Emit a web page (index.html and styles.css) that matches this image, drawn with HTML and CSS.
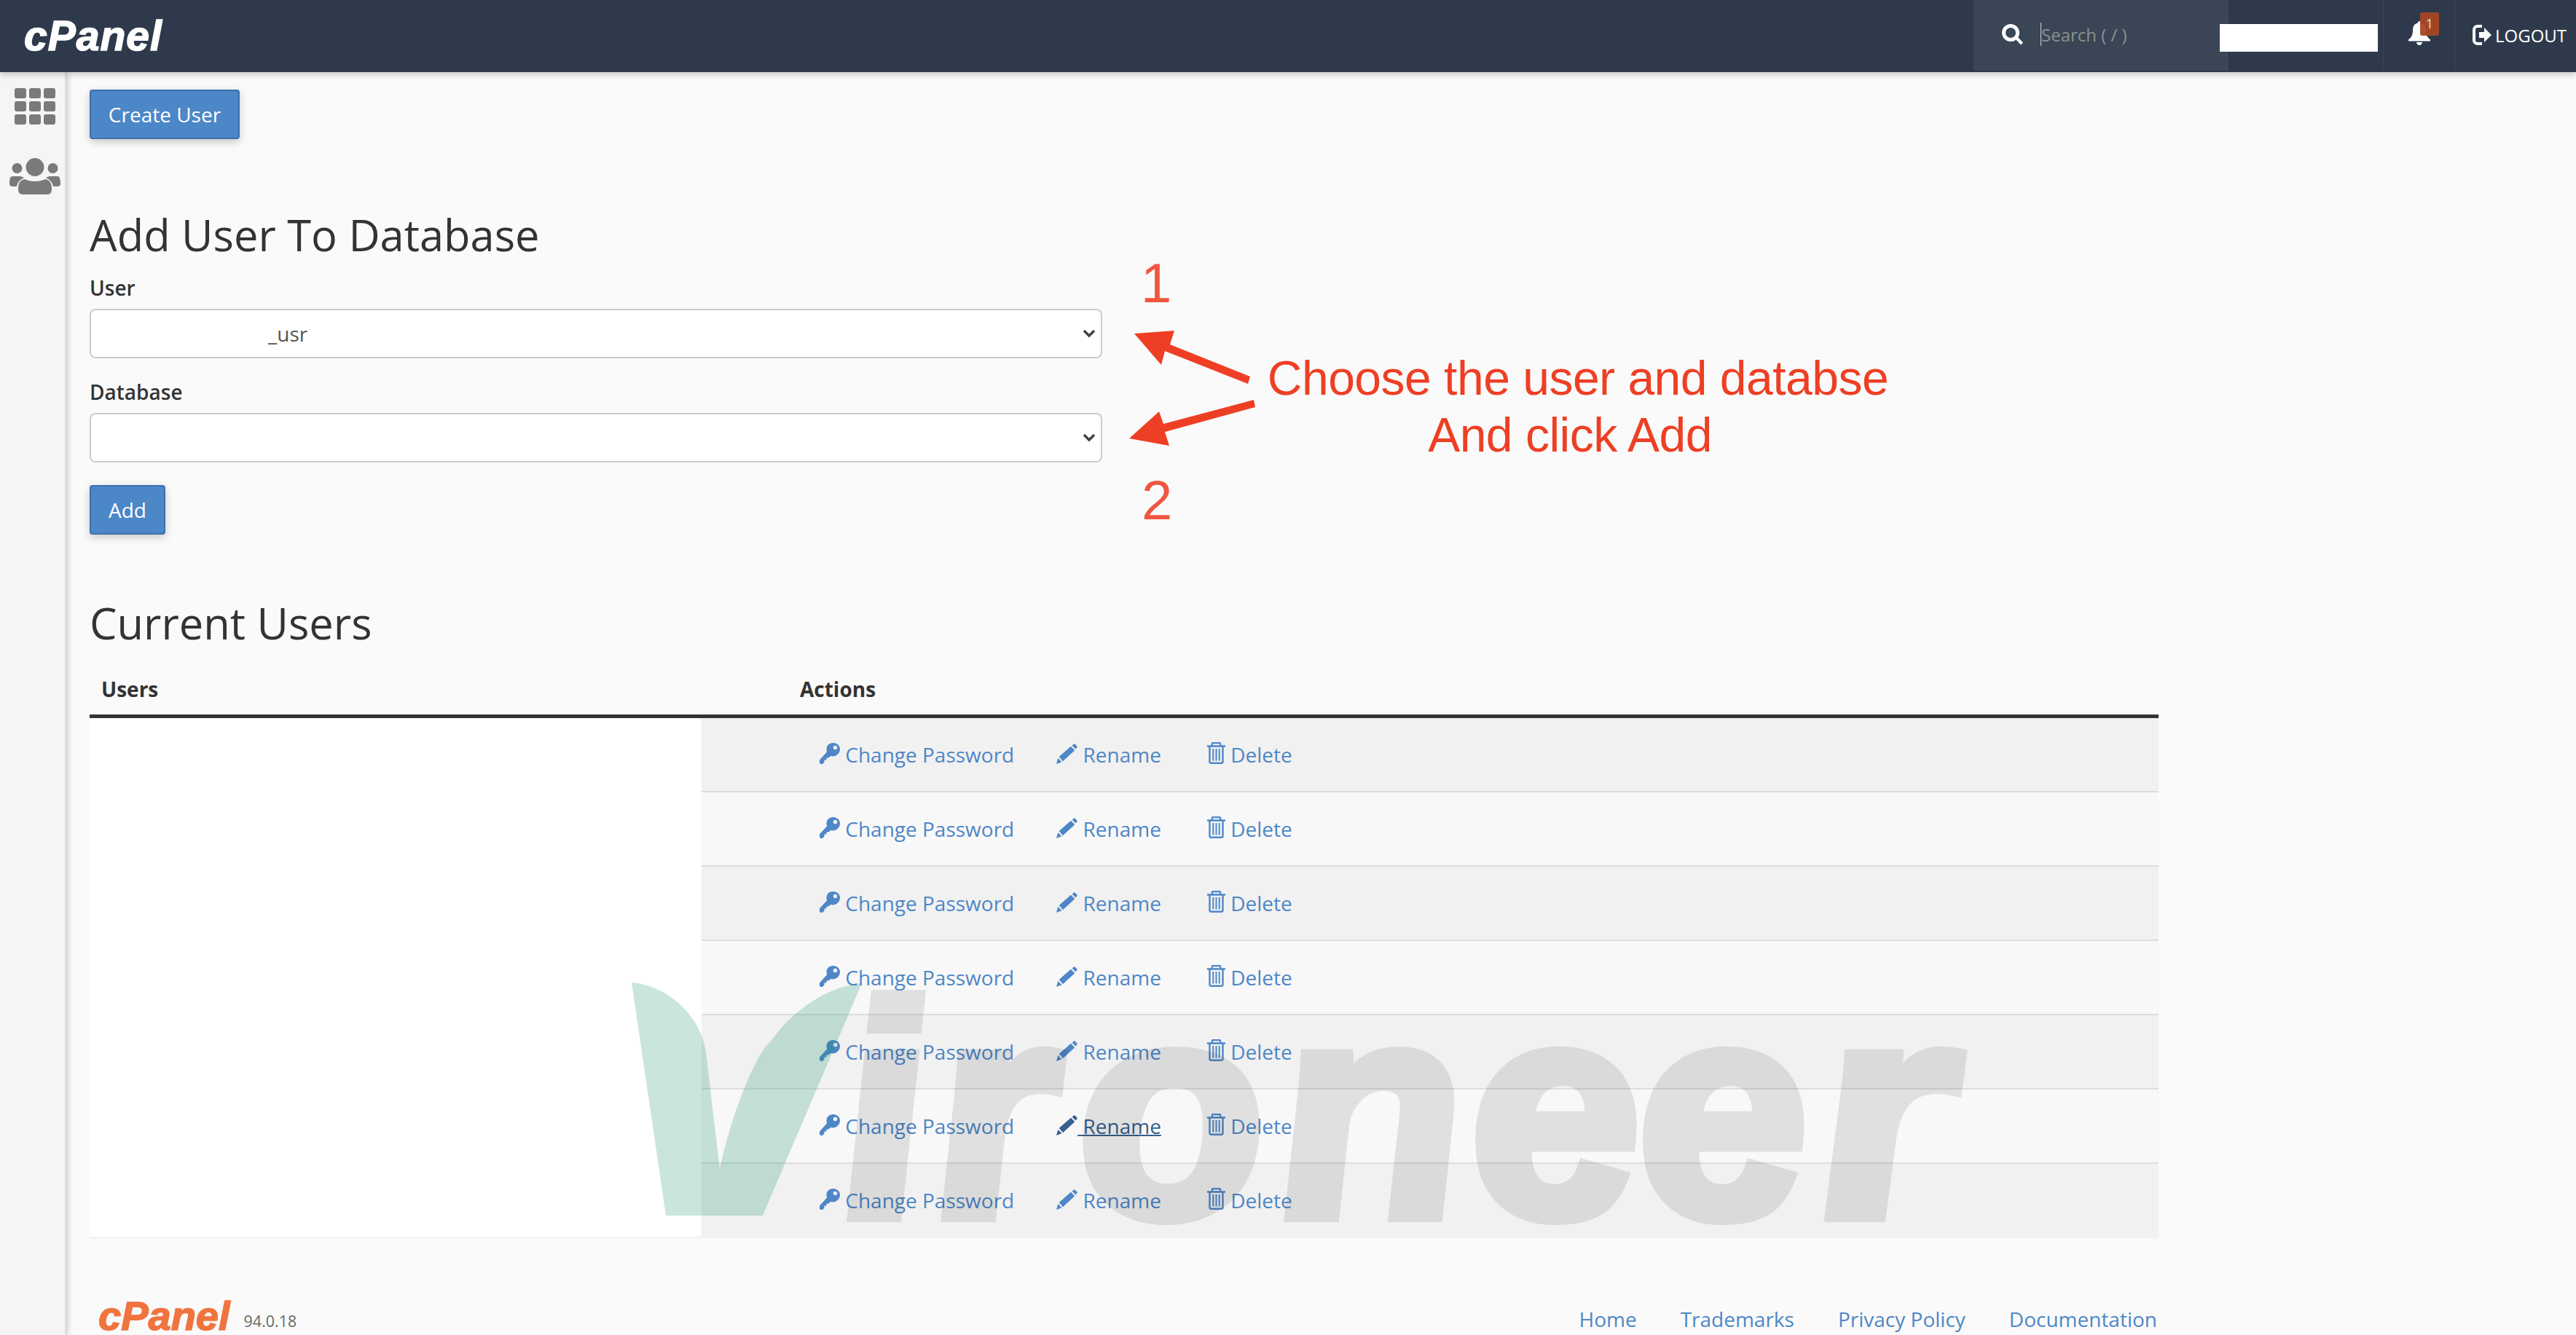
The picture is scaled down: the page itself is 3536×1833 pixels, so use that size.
FILE: index.html
```html
<!DOCTYPE html>
<html lang="en">
<head>
<meta charset="utf-8">
<title>cPanel - Add User To Database</title>
<link rel="stylesheet" href="styles.css">
</head>
<body>
<svg class="defs" width="0" height="0" aria-hidden="true">
  <symbol id="i-key" viewBox="0 0 28 29"><path fill-rule="evenodd" d="M18.500 0C24 0 28 3.800 28 8.500 28 14 23.500 18.500 18 18.500c-1 0-2-.2-2.900-.5L12.500 20.500H9.500v3H6.500V26.500L4 29H1.500L0 27.500V23.500L10.200 12.300C9.700 11 9.500 9.800 9.500 8.500 9.500 3.800 13 0 18.500 0zM21.500 3.800a2.700 2.700 0 1 0 0 5.400 2.700 2.700 0 0 0 0-5.400z"/></symbol>
  <symbol id="i-pencil" viewBox="0 0 29 28"><path d="M0 28l2.300-8 5.200 5.300zM3.700 18L20 3.700l5.300 5.600L9 24.300zM21.500 2.500L25 0l4 4.300-2.500 3.200z"/></symbol>
  <symbol id="i-trash" viewBox="0 0 25 30"><path d="M0 4.300h5.700V1.500L7 0h11l1.300 1.500v2.800H25v2.400H0zM8 4.300h9V2.200H8zM2.300 6.700h2.400V27.500h15.600V6.700h2.400V28l-2 2H4.300l-2-2zM7.300 9h2v16.500h-2zM11.500 9h2v16.500h-2zM15.700 9h2v16.500h-2z"/></symbol>
</svg>

<header class="topbar">
  <span class="logo">cPanel</span>
  <div class="search">
    <svg class="search-icon" viewBox="0 0 29 29"><circle cx="12" cy="12" r="9.500" fill="none" stroke="#fff" stroke-width="5"/><path d="M18 20l3-3 8 8.500-3 3z" fill="#fff"/></svg>
    <span class="caret"></span>
    <input class="search-input" type="text" placeholder="Search ( / )">
  </div>
  <div class="user-cell"></div>
  <div class="bell-cell">
    <svg class="bell" viewBox="0 0 30 33"><path fill="#fff" d="M15 0c1.500 0 2 1 2 2.500 5 1 7 5 7 10 0 6 2 10 6 13v2H0v-2c4-3 6-7 6-13 0-5 2-9 7-10C13 1 13.500 0 15 0zM11 29h8c0 2-2 4-4 4s-4-2-4-4z"/></svg>
    <span class="badge">1</span>
  </div>
  <div class="logout">
    <svg class="logout-icon" viewBox="0 0 26 30"><path fill="none" stroke="#fff" stroke-width="4" d="M13 3H7a5 5 0 0 0-5 5v14a5 5 0 0 0 5 5h6"/><path fill="#fff" d="M9 11h7V5l10 10-10 10v-6H9z"/></svg>
    <span>LOGOUT</span>
  </div>
</header>

<div class="shell">
  <nav class="sidebar">
    <svg class="nav-grid" viewBox="0 0 56 50"><g fill="#7a7a7a"><rect width="16" height="14" rx="3"/><rect x="20" width="16" height="14" rx="3"/><rect x="40" width="16" height="14" rx="3"/><rect y="18" width="16" height="14" rx="3"/><rect x="20" y="18" width="16" height="14" rx="3"/><rect x="40" y="18" width="16" height="14" rx="3"/><rect y="36" width="16" height="14" rx="3"/><rect x="20" y="36" width="16" height="14" rx="3"/><rect x="40" y="36" width="16" height="14" rx="3"/></g></svg>
    <svg class="nav-users" viewBox="0 0 70 50"><g fill="#7a7a7a"><circle cx="35" cy="12.500" r="12.500"/><circle cx="10.500" cy="14" r="7"/><circle cx="59.500" cy="14" r="7"/><path d="M21 29c4 2 9 3 14 3s10-1 14-3c7 1 9 7 9 14 0 4-2 7-6 7H18c-4 0-6-3-6-7 0-7 2-13 9-14z"/><path d="M4 25h10c3 0 4 1 6 2-6 3-9 7-10 12H4c-3 0-4-2-4-4 0-5 1-10 4-10zM56 25h10c3 0 4 5 4 10 0 2-1 4-4 4h-6c-1-5-4-9-10-12 2-1 3-2 6-2z"/></g></svg>
  </nav>

  <main class="content">
    <button class="btn btn-create" type="button">Create User</button>

    <h1 class="title title-add">Add User To Database</h1>

    <label class="field-label" for="sel-user">User</label>
    <select class="field-select" id="sel-user"><option>_usr</option></select>

    <label class="field-label field-label-db" for="sel-db">Database</label>
    <select class="field-select" id="sel-db"><option></option></select>

    <button class="btn btn-add" type="button">Add</button>

    <h1 class="title title-users">Current Users</h1>

    <div class="users-table">
      <div class="users-head">
        <span class="head-users">Users</span>
        <span class="head-actions">Actions</span>
      </div>
      <div class="users-body">
        <div class="users-names"></div>
        <div class="users-rows">
          <div class="row"><a class="act act-pw"><svg><use href="#i-key"/></svg> Change Password</a><a class="act act-rn"><svg><use href="#i-pencil"/></svg> Rename</a><a class="act act-del"><svg><use href="#i-trash"/></svg> Delete</a></div>
          <div class="row"><a class="act act-pw"><svg><use href="#i-key"/></svg> Change Password</a><a class="act act-rn"><svg><use href="#i-pencil"/></svg> Rename</a><a class="act act-del"><svg><use href="#i-trash"/></svg> Delete</a></div>
          <div class="row"><a class="act act-pw"><svg><use href="#i-key"/></svg> Change Password</a><a class="act act-rn"><svg><use href="#i-pencil"/></svg> Rename</a><a class="act act-del"><svg><use href="#i-trash"/></svg> Delete</a></div>
          <div class="row"><a class="act act-pw"><svg><use href="#i-key"/></svg> Change Password</a><a class="act act-rn"><svg><use href="#i-pencil"/></svg> Rename</a><a class="act act-del"><svg><use href="#i-trash"/></svg> Delete</a></div>
          <div class="row"><a class="act act-pw"><svg><use href="#i-key"/></svg> Change Password</a><a class="act act-rn"><svg><use href="#i-pencil"/></svg> Rename</a><a class="act act-del"><svg><use href="#i-trash"/></svg> Delete</a></div>
          <div class="row"><a class="act act-pw"><svg><use href="#i-key"/></svg> Change Password</a><a class="act act-rn act-hover"><svg><use href="#i-pencil"/></svg> Rename</a><a class="act act-del"><svg><use href="#i-trash"/></svg> Delete</a></div>
          <div class="row"><a class="act act-pw"><svg><use href="#i-key"/></svg> Change Password</a><a class="act act-rn"><svg><use href="#i-pencil"/></svg> Rename</a><a class="act act-del"><svg><use href="#i-trash"/></svg> Delete</a></div>
        </div>
      </div>
    </div>

    <footer class="page-footer">
      <div class="footer-brand">
        <span class="footer-logo">cPanel</span>
        <span class="version">94.0.18</span>
      </div>
      <nav class="footer-links">
        <a>Home</a><a>Trademarks</a><a>Privacy Policy</a><a>Documentation</a>
      </nav>
    </footer>
  </main>
</div>

<div class="redact-user"></div>

<svg class="arrows" viewBox="0 0 3536 1833" aria-hidden="true">
  <path fill="#ee3f24" d="M1557 458L1612 454 1606 473 1716 517 1713 527 1599 482 1594 501z"/>
  <path fill="#ee3f24" d="M1550 602L1591 565 1597 582 1721 549 1723 559 1599 593 1605 612z"/>
</svg>
<div class="note-num note-1">1</div>
<div class="note-num note-2">2</div>
<div class="note-text"><span class="note-line-1">Choose the user and databse</span>And click Add</div>

<svg class="wm-leaf" viewBox="0 0 320 324" aria-hidden="true">
  <path fill="#0d8a62" fill-opacity=".22" d="M0 3C52 8 95 50 102 98L121 259C135 190 170 100 191 84 222 40 270 8 316 4L180 323H47z"/>
</svg>
<div class="wm-text"><span class="wl-i">i</span><span class="wl-r">r</span><span class="wl-o">o</span><span class="wl-n">n</span><span class="wl-e1">e</span><span class="wl-e2">e</span><span class="wl-r2">r</span></div>
</body>
</html>
```
FILE: styles.css
```css
* { box-sizing: border-box; }
html, body { margin: 0; padding: 0; }
body {
  width: 3536px;
  height: 1833px;
  overflow: hidden;
  position: relative;
  background: #fafafa;
  color: #333;
  font-family: "Open Sans", "Liberation Sans", sans-serif;
  font-size: 28px;
}
.defs { position: absolute; }

.topbar {
  height: 99px;
  background: #2e3a4c;
  display: flex;
  align-items: stretch;
  position: relative;
  z-index: 2;
  box-shadow: 0 3px 8px rgba(0, 0, 0, .22);
}
.logo {
  margin: 0 auto 0 33px;
  align-self: center;
  color: #fff;
  font-family: "Liberation Sans", sans-serif;
  font-weight: 700;
  font-style: italic;
  font-size: 57px;
  letter-spacing: 1px;
  line-height: 1;
  -webkit-text-stroke: 1.5px #fff;
}
.search {
  width: 349px;
  height: 97px;
  background: #3a4656;
  border-right: 1px solid #46525f;
  display: flex;
  align-items: center;
  padding-left: 39px;
}
.search-icon { width: 29px; height: 29px; flex: none; margin-top: -3px; }
.caret { width: 1px; height: 32px; background: #cfd2d6; margin: -3px 0 0 24px; flex: none; }
.search-input {
  width: 200px;
  border: 0;
  padding: 0;
  background: transparent;
  color: #fff;
  font: 24px "Open Sans", sans-serif;
  margin-top: -3px;
  outline: 0;
}
.search-input::placeholder { color: #8f8f8f; opacity: 1; }
.user-cell { width: 214px; height: 97px; border-right: 1px solid #3a4656; }
.bell-cell { width: 98px; height: 97px; border-right: 1px solid #3a4656; position: relative; }
.bell { position: absolute; left: 34px; top: 29px; width: 30px; height: 33px; }
.badge {
  position: absolute;
  left: 50px;
  top: 17px;
  width: 26px;
  height: 32px;
  border-radius: 3px;
  background: rgba(170, 70, 35, .95);
  color: #ddd;
  font-size: 18px;
  line-height: 30px;
  text-align: center;
}
.logout {
  width: 166px;
  display: flex;
  align-items: center;
  gap: 5px;
  padding-left: 24px;
  color: #fff;
  font-size: 24px;
  margin-top: -3px;
}
.logout-icon { width: 26px; height: 30px; flex: none; }

.redact-user {
  position: absolute;
  left: 3047px;
  top: 33px;
  width: 217px;
  height: 38px;
  background: #fff;
  z-index: 3;
}

.shell { display: flex; height: 1734px; }
.sidebar {
  width: 91px;
  flex: none;
  background: #f5f5f5;
  box-shadow: 2px 0 8px rgba(0, 0, 0, .2);
  border-right: 2px solid #dcdcdc;
  display: flex;
  flex-direction: column;
  align-items: center;
  padding-top: 22px;
}
.nav-grid { width: 56px; height: 50px; margin-left: 7px; }
.nav-users { width: 70px; height: 50px; margin: 46px 0 0 7px; }

.content { flex: 1; padding: 24px 0 0 32px; min-width: 0; }

.btn {
  display: block;
  height: 68px;
  padding: 0;
  border: 2px solid #3d70ad;
  border-radius: 4px;
  background: #4c87c8;
  color: #fff;
  font: 28px "Open Sans", sans-serif;
  box-shadow: 0 4px 12px rgba(0, 0, 0, .2);
}
.btn-create { width: 206px; }
.btn-add { width: 104px; margin-top: 31px; }

.title { margin: 0; font-weight: 400; font-size: 59.600px; line-height: 82px; color: #333; }
.title-add { margin-top: 90px; }
.title-users { margin-top: 80px; }

.field-label { display: block; font-weight: 600; font-size: 28px; line-height: 38px; margin-top: 13px; color: #333; }
.field-label-db { margin-top: 27px; }
.field-select {
  display: block;
  width: 1390px;
  height: 68px;
  margin-top: 10px;
  padding: 0 40px 0 243px;
  appearance: none;
  background-color: #fff;
  background-image: url("data:image/svg+xml,%3Csvg xmlns='http://www.w3.org/2000/svg' viewBox='0 0 18 12'%3E%3Cpath fill='none' stroke='%23444' stroke-width='3.500' d='M2 2l7 7 7-7'/%3E%3C/svg%3E");
  background-repeat: no-repeat;
  background-position: right 7px center;
  background-size: 18px 12px;
  border: 2px solid #ccc;
  border-radius: 8px;
  color: #555;
  font: 28px "Open Sans", sans-serif;
}

.users-table { width: 2840px; margin-top: 24px; }
.users-head {
  height: 66px;
  padding-bottom: 9px;
  display: flex;
  align-items: center;
  border-bottom: 5px solid #333;
  font-weight: 700;
  font-size: 28px;
}
.head-users { width: 959px; padding-left: 16px; }
.head-actions { padding-left: 16px; }
.users-body { display: flex; border-bottom: 2px solid #f1f1f1; }
.users-names { width: 840px; background: #fff; flex: none; }
.users-rows { flex: 1; }
.row {
  height: 102px;
  display: flex;
  align-items: center;
  padding: 0 0 0 162px;
  background: #f8f8f8;
  border-bottom: 2px solid #ddd;
}
.row:nth-child(odd) { background: #f1f1f1; }
.row:last-child { height: 100px; border-bottom: 0; }
.act { color: #4e87c7; white-space: pre; display: inline-block; line-height: 38px; }
.act svg { fill: currentColor; vertical-align: -2px; }
.act-pw svg { width: 28px; height: 29px; }
.act-rn svg { width: 29px; height: 28px; }
.act-del svg { width: 25px; height: 30px; }
.act-rn { margin-left: 58px; }
.act-del { margin-left: 63px; }
.act-hover { color: #35608f; text-decoration: underline; text-decoration-thickness: 2px; }

.page-footer {
  width: 2838px;
  display: flex;
  justify-content: space-between;
  align-items: flex-end;
  margin-top: 84px;
}
.footer-brand { display: flex; align-items: flex-end; padding-left: 12px; }
.footer-logo {
  color: #f0743e;
  font-family: "Liberation Sans", sans-serif;
  font-weight: 700;
  font-style: italic;
  font-size: 56px;
  letter-spacing: 0;
  line-height: 46px;
  -webkit-text-stroke: 1.5px #f0743e;
}
.version { font-size: 21.500px; color: #666; margin-left: 19px; line-height: 32px; }
.footer-links { display: flex; gap: 60px; line-height: 38px; }
.footer-links a { color: #4e87c7; }

.arrows { position: absolute; left: 0; top: 0; width: 3536px; height: 1833px; pointer-events: none; }
.note-num, .note-text { position: absolute; font-family: "Liberation Sans", sans-serif; }
.note-num { color: #f0563f; font-size: 76px; line-height: 1; }
.note-1 { left: 1566px; top: 351px; }
.note-2 { left: 1567px; top: 649px; }
.note-text {
  left: 1655px;
  top: 480px;
  width: 1000px;
  text-align: center;
  color: #ee3f24;
  font-size: 66px;
  line-height: 78px;
  letter-spacing: -.5px;
}
.note-line-1 { display: block; padding-left: 22px; }

.wm-leaf { position: absolute; left: 867px; top: 1346px; width: 320px; height: 324px; pointer-events: none; }
.wm-text {
  position: absolute;
  left: 1165px;
  top: 1318px;
  color: #000;
  opacity: .09;
  font-family: "Liberation Sans", sans-serif;
  font-weight: 700;
  font-style: italic;
  font-size: 415px;
  line-height: 1;
  white-space: nowrap;
  -webkit-text-stroke: 18px #000;
  transform: skewX(5deg);
  transform-origin: 0 351px;
  pointer-events: none;
}
.wl-i { letter-spacing: 14px; }
.wl-r { letter-spacing: 35px; }
.wl-o { letter-spacing: 21px; }
.wl-n { letter-spacing: 11px; }
.wl-e1 { letter-spacing: -1px; }
.wl-e2 { letter-spacing: 17px; }
.wl-r2 { display: inline-block; transform: scaleX(1.12); transform-origin: 0 0; }
```
